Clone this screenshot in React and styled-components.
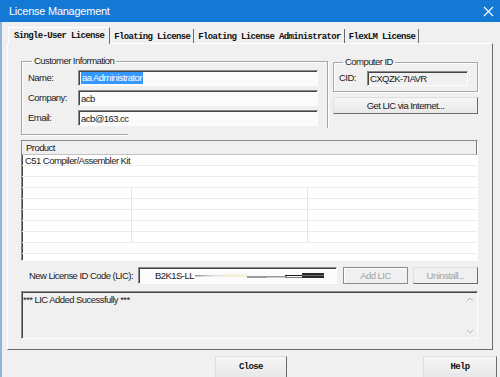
import React from "react";
import styled, { createGlobalStyle, css } from "styled-components";

const GlobalStyle = createGlobalStyle`
  html, body {
    margin: 0;
    padding: 0;
    background: #f0f0f0;
  }
  body {
    width: 500px;
    height: 377px;
    overflow: hidden;
    font-family: "Liberation Sans", Arial, sans-serif;
  }
`;

const sans = css`
  font-family: "Liberation Sans", Arial, sans-serif;
  font-size: 9.5px;
  letter-spacing: -0.55px;
  color: #1a1a1a;
`;

const mono = css`
  font-family: "Liberation Mono", "Courier New", monospace;
  font-weight: bold;
  font-size: 9px;
  letter-spacing: -0.65px;
  color: #111;
`;

const sunken = css`
  box-sizing: border-box;
  border: 1px solid;
  border-color: #8a8a8a #fdfdfd #fdfdfd #8a8a8a;
  box-shadow: inset 1px 1px 0 #454545;
`;

const Window = styled.div`
  width: 500px;
  height: 377px;
  display: flex;
  flex-direction: column;
  overflow: hidden;
  background: #f0f0f0;
`;

const TitleBar = styled.div`
  height: 22px;
  flex-shrink: 0;
  background: #1479d4;
  display: flex;
  align-items: center;
  justify-content: space-between;
  padding: 0 6px 0 9px;
  color: #fff;
  font-family: "Liberation Sans", Arial, sans-serif;
  font-size: 11px;
  letter-spacing: -0.25px;
`;

const Body = styled.div`
  flex: 1;
  display: flex;
  flex-direction: column;
  border-left: 2px solid #8db4da;
`;

const TabStrip = styled.div`
  height: 21px;
  display: flex;
  align-items: flex-end;
  padding-left: 6px;
`;

const Tab = styled.div`
  ${mono};
  box-sizing: border-box;
  display: flex;
  align-items: center;
  padding: 0 3px;
  border-right: 1px solid #6a6a6a;
  ${({ $active }) =>
    $active
      ? css`
          height: 17px;
          margin-bottom: -1px;
          padding-left: 5px;
          padding-right: 5px;
          border-top: 1px solid #fff;
          border-left: 1px solid #fff;
          background: #f0f0f0;
          position: relative;
          z-index: 1;
        `
      : css`
          height: 14px;
          margin-left: 1px;
          padding-top: 1px;
        `}
`;

const Panel = styled.div`
  margin-left: 5px;
  width: 486px;
  box-sizing: border-box;
  border: 1px solid;
  border-color: #fff #6a6a6a #6a6a6a #fff;
  padding: 11px 14px 10px 13px;
  display: flex;
  flex-direction: column;
`;

const TopRow = styled.div`
  display: flex;
  gap: 5px;
  align-items: flex-start;
`;

const Group = styled.fieldset`
  ${sans};
  margin: 0;
  box-sizing: border-box;
  width: ${({ $w }) => $w}px;
  border: 1px solid #a6a6a6;
  box-shadow: 1px 1px 0 #fff, inset 1px 1px 0 #fff;
  padding: ${({ $pad }) => $pad};
  position: relative;
`;

const Legend = styled.legend`
  ${sans};
  padding: 0 2px;
  margin-left: 4px;
  line-height: 12px;
`;

const FormGrid = styled.div`
  display: grid;
  grid-template-columns: 50px 240px;
  row-gap: 4px;
  align-items: center;
`;

const Label = styled.span`
  ${sans};
  line-height: 16px;
  width: ${({ $w }) => ($w ? `${$w}px` : "auto")};
`;

const Field = styled.div`
  ${sans};
  ${sunken};
  height: ${({ $h }) => $h || 16}px;
  width: ${({ $w }) => ($w ? `${$w}px` : "auto")};
  background: ${({ $readOnly }) => ($readOnly ? "#f0f0f0" : "#fbfbfb")};
  display: flex;
  align-items: center;
  padding-left: ${({ $pl }) => $pl ?? 2}px;
  overflow: hidden;
  white-space: nowrap;
  flex-shrink: 0;
`;

const Selected = styled.span`
  background: #3399ff;
  color: #fff;
  padding: 0 1px;
  line-height: 12px;
`;

// the dialog left this patch unpainted in the source picture
const Unpainted = styled.div`
  position: absolute;
  left: 106px;
  top: 61px;
  right: -6px;
  bottom: -3px;
  background: #f0f0f0;
`;

const RightColumn = styled.div`
  width: 145px;
  margin-top: 1px;
  display: flex;
  flex-direction: column;
  gap: 5px;
`;

const CidRow = styled.div`
  display: flex;
  align-items: center;
`;

const Button = styled.div`
  box-sizing: border-box;
  height: ${({ $h }) => $h || 17}px;
  width: ${({ $w }) => ($w ? `${$w}px` : "100%")};
  display: flex;
  align-items: center;
  justify-content: center;
  flex-shrink: 0;
  background: linear-gradient(#f6f6f6, #e8e8e8);
  border: 1px solid;
  border-color: #dedede #6b6b6b #6b6b6b #dedede;
  ${({ $mono }) => ($mono ? mono : sans)};
  ${({ $disabled }) =>
    $disabled &&
    css`
      color: #a3a3a3;
      background: #f0f0f0;
    `}
  ${({ $outlined }) =>
    $outlined &&
    css`
      border-color: #8c8c8c;
      box-shadow: inset 1px 1px 0 #fff;
    `}
`;

const ProductList = styled.div`
  ${sunken};
  margin-top: 5px;
  height: 121px;
  background: #fff;
  overflow: hidden;
  display: flex;
  flex-direction: column;
`;

const ListHeader = styled.div`
  ${sans};
  height: 14px;
  flex-shrink: 0;
  box-sizing: border-box;
  background: #f0f0f0;
  border-bottom: 1px solid #c2c2c2;
  border-right: 1px solid #777;
  padding-left: 4px;
  display: flex;
  align-items: center;
`;

const Row = styled.div`
  ${sans};
  height: 11px;
  flex-shrink: 0;
  box-sizing: border-box;
  border-bottom: 1px solid #ececec;
  padding-left: 3px;
  line-height: 11px;
  display: grid;
  grid-template-columns: ${({ $split }) => ($split ? "107px 176px 1fr" : "1fr")};
`;

const Cell = styled.div`
  border-right: ${({ $line }) => ($line ? "1px solid #e6e6e6" : "none")};
  white-space: nowrap;
`;

const LicRow = styled.div`
  margin-top: 6px;
  display: flex;
  align-items: center;
  padding-left: 8px;
`;

const LicLabel = styled.span`
  ${sans};
  width: 109px;
  flex-shrink: 0;
`;

const LicGap = styled.div`
  width: ${({ $w }) => $w}px;
  flex-shrink: 0;
`;

const StatusBox = styled.div`
  ${sunken};
  margin-top: 7px;
  height: 48px;
  background: #f0f0f0;
  display: flex;
`;

const StatusText = styled.div`
  ${sans};
  flex: 1;
  padding: 2px 0 0 1px;
`;

const ScrollBar = styled.div`
  width: 15px;
  display: flex;
  flex-direction: column;
  justify-content: space-between;
  align-items: center;
  padding: 5px 0 4px;
`;

const Footer = styled.div`
  display: flex;
  justify-content: space-between;
  padding: 6px 3px 0 213px;
`;

const Chevron = ({ up }) => (
  <svg width="8" height="5" viewBox="0 0 8 5">
    <polyline
      points={up ? "1,4 4,1 7,4" : "1,1 4,4 7,1"}
      fill="none"
      stroke="#b9b9b9"
      strokeWidth="1"
    />
  </svg>
);

const CloseIcon = () => (
  <svg width="11" height="11" viewBox="0 0 11 11">
    <path d="M1 1 L10 10 M10 1 L1 10" stroke="#fff" strokeWidth="1.1" />
  </svg>
);

// smeared-out part of the licence code, as in the source picture
const Smear = () => (
  <svg width="132" height="8" viewBox="0 0 132 8" style={{ marginLeft: 1 }}>
    <defs>
      <linearGradient id="fade" x1="0" x2="1" y1="0" y2="0">
        <stop offset="0" stopColor="#8a8a8a" />
        <stop offset="0.5" stopColor="#d8d8d8" />
        <stop offset="1" stopColor="#f2efdc" />
      </linearGradient>
    </defs>
    <rect x="0" y="3" width="36" height="1.4" fill="url(#fade)" />
    <rect x="30" y="2" width="22" height="3" fill="#f4f0d8" />
    <rect x="52" y="4.5" width="20" height="1" fill="#3a3a3a" />
    <rect x="70" y="4" width="22" height="1.5" fill="#9a9a9a" />
    <rect x="90" y="3" width="18" height="1" fill="#1a1a1a" />
    <rect x="90" y="5" width="18" height="1" fill="#7a7a7a" />
    <rect x="107" y="1" width="22" height="5" fill="#2a2a2a" />
    <rect x="107" y="3" width="22" height="1" fill="#6a6a6a" />
  </svg>
);

const rows = Array.from({ length: 10 }, (_, i) => i);

export default function App() {
  return (
    <>
      <GlobalStyle />
      <Window>
        <TitleBar>
          <span>License Management</span>
          <CloseIcon />
        </TitleBar>
        <Body>
          <TabStrip>
            <Tab $active>Single-User License</Tab>
            <Tab>Floating License</Tab>
            <Tab>Floating License Administrator</Tab>
            <Tab>FlexLM License</Tab>
          </TabStrip>
          <Panel>
            <TopRow>
              <Group $w={307} $pad="3px 0 8px 6px">
                <Legend>Customer Information</Legend>
                <FormGrid>
                  <Label>Name:</Label>
                  <Field>
                    <Selected>aa Administrator</Selected>
                  </Field>
                  <Label>Company:</Label>
                  <Field>acb</Field>
                  <Label>Email:</Label>
                  <Field>acb@163.cc</Field>
                </FormGrid>
                <Unpainted />
              </Group>
              <RightColumn>
                <Group $w={145} $pad="2px 0 5px 5px">
                  <Legend>Computer ID</Legend>
                  <CidRow>
                    <Label $w={28}>CID:</Label>
                    <Field $readOnly $w={101} $h={15}>
                      CXQZK-7IAVR
                    </Field>
                  </CidRow>
                </Group>
                <Button>Get LIC via Internet...</Button>
              </RightColumn>
            </TopRow>

            <ProductList>
              <ListHeader>Product</ListHeader>
              {rows.map((i) => {
                const split = i >= 3 && i <= 7;
                return (
                  <Row key={i} $split={split}>
                    {split ? (
                      <>
                        <Cell $line />
                        <Cell $line />
                        <Cell />
                      </>
                    ) : (
                      <Cell>{i === 0 ? "C51 Compiler/Assembler Kit" : ""}</Cell>
                    )}
                  </Row>
                );
              })}
            </ProductList>

            <LicRow>
              <LicLabel>New License ID Code (LIC):</LicLabel>
              <Field $w={199} $h={17} $pl={16}>
                B2K1S-LL
                <Smear />
              </Field>
              <LicGap $w={6} />
              <Button $w={65} $disabled $outlined>
                Add LIC
              </Button>
              <LicGap $w={5} />
              <Button $w={65} $disabled>
                Uninstall...
              </Button>
            </LicRow>

            <StatusBox>
              <StatusText>*** LIC Added Sucessfully ***</StatusText>
              <ScrollBar>
                <Chevron up />
                <Chevron />
              </ScrollBar>
            </StatusBox>
          </Panel>

          <Footer>
            <Button $mono $w={72} $h={22}>
              Close
            </Button>
            <Button $mono $w={74} $h={22}>
              Help
            </Button>
          </Footer>
        </Body>
      </Window>
    </>
  );
}
